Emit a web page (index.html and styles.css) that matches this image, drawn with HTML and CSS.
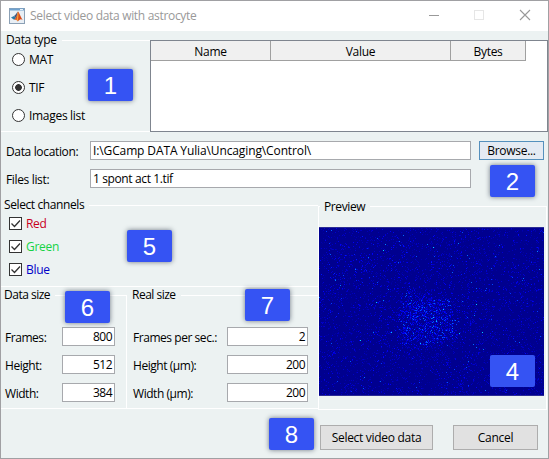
FILE: index.html
```
<!DOCTYPE html>
<html lang="en">
<head>
<meta charset="utf-8">
<title>Select video data with astrocyte</title>
<link rel="stylesheet" href="styles.css">
</head>
<body>
<main class="window">
  <header class="titlebar">
    <svg class="logo" width="16" height="16" viewBox="0 0 16 16">
      <rect x=".5" y=".5" width="15" height="15" fill="#e9eff5" stroke="#8ba0b5"/>
      <path d="M1 1.5h14" stroke="#6fa2cf" stroke-width="2"/>
      <path d="M11 1.5h3" stroke="#e8f2fa"/>
      <path d="M2 9.500l3-1.600 2.200 2L5 11.800z" fill="#2879a8"/>
      <path d="M5 7.900C7 7.300 7.500 4.500 9 3.600L7.200 9.900z" fill="#45577b"/>
      <path d="M9 3.600c1.300.6 2.600 5.800 4.700 8.400-2.200-1.600-3.300-.2-4.800 1.400-.6-1.200-1.500-1.800-3.900-1.600 2.500-1.500 2.900-5 4-8.200z" fill="#d94b1a"/>
      <path d="M9 3.600c.9 2.300.3 5.700-.1 9.800-.4-.7-.8-1.100-1.400-1.400C8.200 9.500 8.300 6 9 3.600z" fill="#f3a03c"/>
    </svg>
    <h1 class="title">Select video data with astrocyte</h1>
    <svg class="controls" width="104" height="12" viewBox="0 0 104 12">
      <path d="M0 6.500h10" stroke="#999" fill="none"/>
      <rect x="45.500" y="1.500" width="9" height="9" stroke="#e6e6e6" fill="none"/>
      <path d="M91 1l10 10M101 1L91 11" stroke="#999" stroke-width="1.100" fill="none"/>
    </svg>
  </header>

  <section class="top">
    <div class="group type">
      <h2 class="legend">Data type</h2>
      <div class="radios">
        <label class="option"><i class="radio"></i><span>MAT</span></label>
        <label class="option"><i class="radio on"></i><span>TIF</span></label>
        <label class="option"><i class="radio"></i><span>Images list</span></label>
      </div>
      <b class="badge b1">1</b>
    </div>
    <div class="table">
      <div class="head"><span>Name</span><span>Value</span><span>Bytes</span></div>
    </div>
  </section>

  <section class="files">
    <span class="label">Data location:</span><div class="field path">I:\GCamp DATA Yulia\Uncaging\Control\</div><button class="browse">Browse...</button>
    <span class="label">Files list:</span><div class="field file">1 spont act 1.tif</div>
    <b class="badge b2">2</b>
  </section>

  <section class="middle">
    <div class="left">
      <div class="group channels">
        <h2 class="legend">Select channels</h2>
        <div class="checks">
          <label class="option red"><svg class="check" width="13" height="13"><rect x=".5" y=".5" width="12" height="12"/><path d="M2.500 6.500l3 3 5.500-6"/></svg><span>Red</span></label>
          <label class="option green"><svg class="check" width="13" height="13"><rect x=".5" y=".5" width="12" height="12"/><path d="M2.500 6.500l3 3 5.500-6"/></svg><span>Green</span></label>
          <label class="option blue"><svg class="check" width="13" height="13"><rect x=".5" y=".5" width="12" height="12"/><path d="M2.500 6.500l3 3 5.500-6"/></svg><span>Blue</span></label>
        </div>
        <b class="badge b5">5</b>
      </div>
      <div class="sizes">
        <div class="group data">
          <h2 class="legend">Data size</h2>
          <div class="rows">
            <span>Frames:</span><div class="field num">800</div>
            <span>Height:</span><div class="field num">512</div>
            <span>Width:</span><div class="field num">384</div>
          </div>
          <b class="badge b6">6</b>
        </div>
        <div class="group real">
          <h2 class="legend">Real size</h2>
          <div class="rows">
            <span>Frames per sec.:</span><div class="field num">2</div>
            <span>Height (µm):</span><div class="field num">200</div>
            <span>Width (µm):</span><div class="field num">200</div>
          </div>
          <b class="badge b7">7</b>
        </div>
      </div>
    </div>
    <div class="group preview">
      <h2 class="legend">Preview</h2>
      <canvas id="frame" width="225" height="169"></canvas>
      <b class="badge b4">4</b>
    </div>
  </section>

  <footer class="actions">
    <b class="badge b8">8</b>
    <button class="select">Select video data</button>
    <button class="cancel">Cancel</button>
  </footer>
</main>
<script src="preview.js"></script>
</body>
</html>
```
FILE: preview.js
```
// Draws a fluorescence frame: sparse background noise and a bright cell.
(function () {
  var c = document.getElementById('frame');
  var g = c.getContext('2d');
  var state = 4711;
  function rnd() {
    state = (state + 0x6D2B79F5) | 0;
    var t = Math.imul(state ^ (state >>> 15), 1 | state);
    t = (t + Math.imul(t ^ (t >>> 7), 61 | t)) ^ t;
    return ((t ^ (t >>> 14)) >>> 0) / 4294967296;
  }
  function gauss() {
    return rnd() + rnd() + rnd() - 1.5;
  }
  function dot(x, y, v) {
    g.fillStyle = v < 1 ? 'rgb(0,0,' + Math.round(145 + v * 110) + ')'
      : 'rgb(0,' + Math.round(Math.min(v - 1, 1) * 225) + ',255)';
    g.fillRect(Math.floor(x), Math.floor(y), 1, 1);
  }
  g.fillStyle = '#00008f';
  g.fillRect(0, 0, 225, 169);
  var i, x, y;
  for (i = 0; i < 4200; i++) dot(rnd() * 225, 1 + rnd() * 167, rnd() * 0.6);
  for (i = 0; i < 650; i++) dot(rnd() * 225, 1 + rnd() * 167, 0.5 + rnd() * 0.6);
  for (i = 0; i < 85; i++) dot(rnd() * 225, 1 + rnd() * 167, 1.2 + rnd() * 0.4);
  for (i = 0; i < 130; i++) dot(45 + gauss() * 50, 34 + gauss() * 25, 0.4 + rnd() * 0.8);
  for (i = 0; i < 550; i++) dot(108 + gauss() * 60, 94 + gauss() * 50, 0.2 + rnd() * 0.9);
  // outline of the cell body
  var body = new Path2D('M91 58L99 67L128 74L134 94L139 110L128 114L105 118L82 116L81 87Z');
  for (i = 0; i < 1900; i++) {
    x = 80 + rnd() * 62;
    y = 58 + rnd() * 61;
    if (g.isPointInPath(body, x, y)) dot(x + gauss() * 5, y + gauss() * 5, 0.1 + Math.pow(rnd(), 1.6) * 1.4);
  }
  [[57, 75], [41, 113], [124, 82], [101, 116], [64, 23], [72, 105], [114, 90], [117, 94], [114, 20], [140, 106], [163, 105], [157, 77]].forEach(function (p) {
    dot(p[0], p[1], 1.9);
  });
  g.fillStyle = '#2b2b96';
  g.fillRect(0, 0, 225, 1);
  g.fillRect(0, 168, 225, 1);
})();
```
FILE: styles.css
```
* { box-sizing: border-box; }
body { margin: 0; font: 12px/16px "Open Sans", "Noto Sans", sans-serif; letter-spacing: -0.3px; color: #000; overflow: hidden; }
.window { width: 549px; height: 459px; border: 1px solid #a0a0a3; background: #ecf2f2; display: flex; flex-direction: column; }
h1, h2 { margin: 0; font-size: 12px; font-weight: 400; }
.titlebar { height: 30px; flex: none; background: #fff; display: flex; align-items: center; padding: 0 16px 0 8px; }
.logo { flex: none; }
.title { flex: 1; margin-left: 5px; color: #999; letter-spacing: -0.31px; white-space: nowrap; }
.controls { margin-right: -1px; margin-top: -2px; }

.group { position: relative; border-top: 1px solid #fff; }
.legend { position: relative; width: max-content; height: 16px; background: #ecf2f2; margin-top: -9px; padding-right: 5px; white-space: nowrap; letter-spacing: -0.4px; }
.option { display: flex; align-items: center; height: 16px; }

.top { display: flex; height: 92px; flex: none; margin-top: 9px; }
.type { width: 149px; border-bottom: 1px solid #fff; }
.type .legend { padding-left: 5px; letter-spacing: -0.35px; }
.radios { display: grid; row-gap: 12px; padding: 4px 0 0 11px; }
.radio { width: 13px; height: 13px; border: 1px solid #333; border-radius: 50%; background: #fff; margin: 0 4px 2px 0; }
.radio.on { background: radial-gradient(circle, #333 3px, #fff 3.700px); }
.table { flex: 1; border: 1px solid #7f858f; background: #fff; }
.head { display: grid; grid-template-columns: 120px 180px 75px; grid-template-rows: 20px; height: 20px; width: 375px; background: #f0f0f0; }
.head span { border-right: 1px solid #a0a0a0; border-bottom: 1px solid #a0a0a0; text-align: center; line-height: 22px; }

.files { position: relative; flex: none; height: 64px; padding: 9px 0 0 5px; display: grid; grid-template-columns: 84px 381px 66px; grid-template-rows: 19px 19px; row-gap: 9px; }
.files .browse { margin-left: 8px; }
.label { line-height: 22px; white-space: nowrap; letter-spacing: -0.35px; }
.field { height: 19px; border: 1px solid #a7a9ad; background: #fff; line-height: 17px; padding: 0 2px; white-space: nowrap; }
.path { letter-spacing: -0.12px; }
.file { letter-spacing: -0.38px; }
.num { text-align: right; letter-spacing: -0.5px; }
button { font: inherit; letter-spacing: inherit; color: #000; border: 1px solid #adadad; background: #e1e1e1; padding: 0; white-space: nowrap; }
.browse { width: 65px; height: 19px; border-color: #5590bd; background: #e4eaf3; line-height: 17px; }

.middle { display: flex; height: 213px; flex: none; }
.left { width: 317px; }
.channels { height: 82px; margin-top: 9px; border-bottom: 1px solid #fff; }
.channels .legend { padding-left: 3px; }
.checks { display: grid; row-gap: 7px; padding: 3px 0 0 8px; }
.check { margin: 0 4px 2px 0; fill: #fff; stroke: #333; }
.check path { fill: none; stroke-width: 1.300; }
.red { color: #c8001c; }
.green { color: #16d245; }
.blue { color: #0000c8; }
.sizes { display: flex; margin-top: 8px; }
.data, .real { height: 114px; border-bottom: 1px solid #fff; }
.data { width: 126px; border-right: 1px solid #fff; }
.data .legend { padding-left: 3px; letter-spacing: -0.5px; }
.real { width: 191px; }
.real .legend { padding-left: 5px; letter-spacing: -0.5px; }
.rows { display: grid; grid-auto-rows: 19px; row-gap: 9px; line-height: 22px; padding: 24px 10px 0 4px; grid-template-columns: 57px 53px; letter-spacing: -0.45px; }
.real .rows { padding-left: 6px; grid-template-columns: 94px 81px; }
.preview { width: 229px; height: 204px; margin-top: 10px; border: 1px solid #fff; }
.preview .legend { margin: -8px 0 0 1px; padding-left: 4px; letter-spacing: -0.4px; }
.preview canvas { display: block; margin-top: 12px; }

.actions { position: relative; display: flex; gap: 20px; padding: 9px 0 0 319px; margin-top: 7px; }
.actions button { height: 25px; }
.select { width: 113px; }
.cancel { width: 85px; }

.badge { position: absolute; width: 45px; height: 32px; border-radius: 2px; background: #3553f3; color: #fff; font: 24px/33px "Liberation Sans", sans-serif; text-align: center; letter-spacing: 0; box-shadow: 0 0 5px rgba(40, 50, 70, .65); }
.b1 { left: 87px; top: 28px; }
.b2 { left: 489px; top: 33px; }
.b4 { left: 171px; top: 148px; box-shadow: none; }
.b5 { left: 126px; top: 24px; }
.b6 { left: 64px; top: -5px; }
.b7 { left: 118px; top: -7px; }
.b8 { left: 268px; top: 2px; }
```
